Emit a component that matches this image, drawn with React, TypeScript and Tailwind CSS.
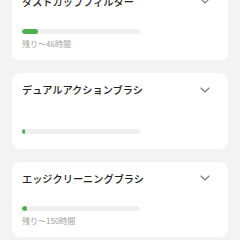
import React from "react";
import { ChevronDown } from "lucide-react";

const font = { fontFamily: '"Noto Sans CJK JP", "Noto Sans", sans-serif' };

function Card({ title, fill, remain }: { title: string; fill: number; remain?: string }) {
  return (
    <div className="h-[75.5px] rounded-[8px] bg-white flex flex-col pt-[8px] pb-[10px] pl-[10px] pr-[15px]">
      <div className="flex items-center justify-between">
        <span className="text-[10.2px] leading-[17px] font-medium text-[#222222]">{title}</span>
        <ChevronDown size={16} color="#777777" strokeWidth={1.6} />
      </div>
      <div className="mt-auto">
        <div className="h-[5px] w-[118px] rounded-full bg-[#efefef] overflow-hidden">
          <div className="h-full rounded-full bg-[#4caf50]" style={{ width: `${fill}px` }} />
        </div>
        {remain ? (
          <div className="mt-[4px] text-[8px] leading-[12px] text-[#9e9e9e]">{remain}</div>
        ) : (
          <div className="h-[5px]" />
        )}
      </div>
    </div>
  );
}

export default function App() {
  return (
    <div className="w-[240px] h-[240px] overflow-hidden bg-[#f3f3f3]" style={font}>
      <div className="-mt-[15.5px] px-[12px] flex flex-col gap-[13px]">
        <Card title="ダストカップフィルター" fill={16} remain="残り〜46時間" />
        <Card title="デュアルアクションブラシ" fill={3} />
        <Card title="エッジクリーニングブラシ" fill={5} remain="残り〜150時間" />
      </div>
    </div>
  );
}
